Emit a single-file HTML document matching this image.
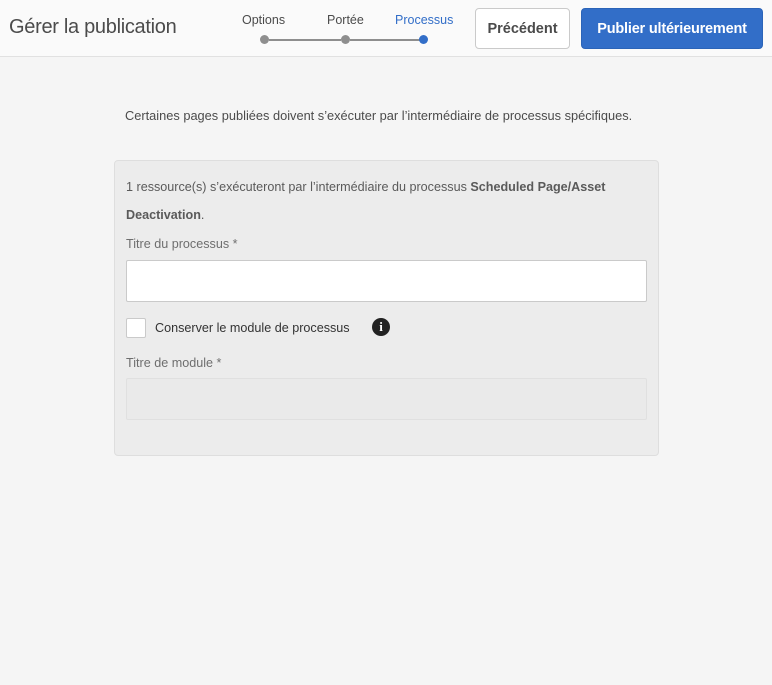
<!DOCTYPE html>
<html><head><meta charset="utf-8"><style>
*{box-sizing:border-box;margin:0;padding:0}
body{width:772px;height:685px;background:#f5f5f5;font-family:"Liberation Sans",sans-serif;color:#4b4b4b;position:relative;overflow:hidden}
.hdr{position:absolute;left:0;top:0;width:772px;height:57px;background:#fafafa;border-bottom:1px solid #e1e1e1}
.title{position:absolute;left:9px;top:16px;font-size:20px;color:#4b4b4b;letter-spacing:-0.3px}
.st{position:absolute;top:13px;font-size:12.5px;color:#4b4b4b}
.dot{position:absolute;top:35px;width:9px;height:9px;border-radius:50%;background:#8e8e8e}
.ln{position:absolute;top:39px;height:2px;background:#8e8e8e}
.btn{position:absolute;top:8px;height:41px;border-radius:4px;font-weight:bold;font-size:14.5px;display:flex;align-items:center;justify-content:center}
.prev{left:475px;width:95px;border:1px solid #cacaca;background:#fff;color:#4b4b4b}
.pub{left:581px;width:182px;background:#326ec8;color:#fff;border:1px solid #2b64b8;letter-spacing:-0.2px}
.intro{position:absolute;left:125px;top:108px;font-size:12.8px;color:#4b4b4b}
.panel{position:absolute;left:114px;top:160px;width:545px;height:296px;background:#ececec;border:1px solid #dedede;border-radius:4px}
.t{position:absolute;font-size:12.6px;color:#5a5a5a}
.inp{position:absolute;left:11px;width:521px;height:42px;border:1px solid #cacaca;background:#fff;border-radius:2px}
</style></head><body>
<div class="hdr">
<div class="title">Gérer la publication</div>
<div class="st" style="left:242px">Options</div>
<div class="st" style="left:327px">Portée</div>
<div class="st" style="left:395px;color:#326ec8">Processus</div>
<div class="dot" style="left:260px"></div>
<div class="ln" style="left:269px;width:72px"></div>
<div class="dot" style="left:341px"></div>
<div class="ln" style="left:350px;width:70px"></div>
<div class="dot" style="left:419px;background:#326ec8"></div>
<div class="btn prev">Précédent</div>
<div class="btn pub">Publier ultérieurement</div>
</div>
<div class="intro">Certaines pages publiées doivent s’exécuter par l’intermédiaire de processus spécifiques.</div>
<div class="panel">
<div class="t" style="left:11px;top:19px">1 ressource(s) s’exécuteront par l’intermédiaire du processus <b>Scheduled Page/Asset</b></div>
<div class="t" style="left:11px;top:47px"><b>Deactivation</b>.</div>
<div class="t" style="left:11px;top:76px;color:#6e6e6e">Titre du processus *</div>
<div class="inp" style="top:99px"></div>
<div style="position:absolute;left:11px;top:157px;width:20px;height:20px;border:1px solid #cacaca;background:#fff;border-radius:2px"></div>
<div class="t" style="left:40px;top:160px;color:#333">Conserver le module de processus</div>
<div style="position:absolute;left:257px;top:157px;width:18px;height:18px;border-radius:50%;background:#222;color:#fff;font-weight:bold;font-family:'Liberation Serif',serif;font-size:13px;text-align:center;line-height:18px">i</div>
<div class="t" style="left:11px;top:195px;color:#6e6e6e">Titre de module *</div>
<div class="inp" style="top:217px;background:#eaeaea;border-color:#e0e0e0"></div>
</div>
</body></html>
